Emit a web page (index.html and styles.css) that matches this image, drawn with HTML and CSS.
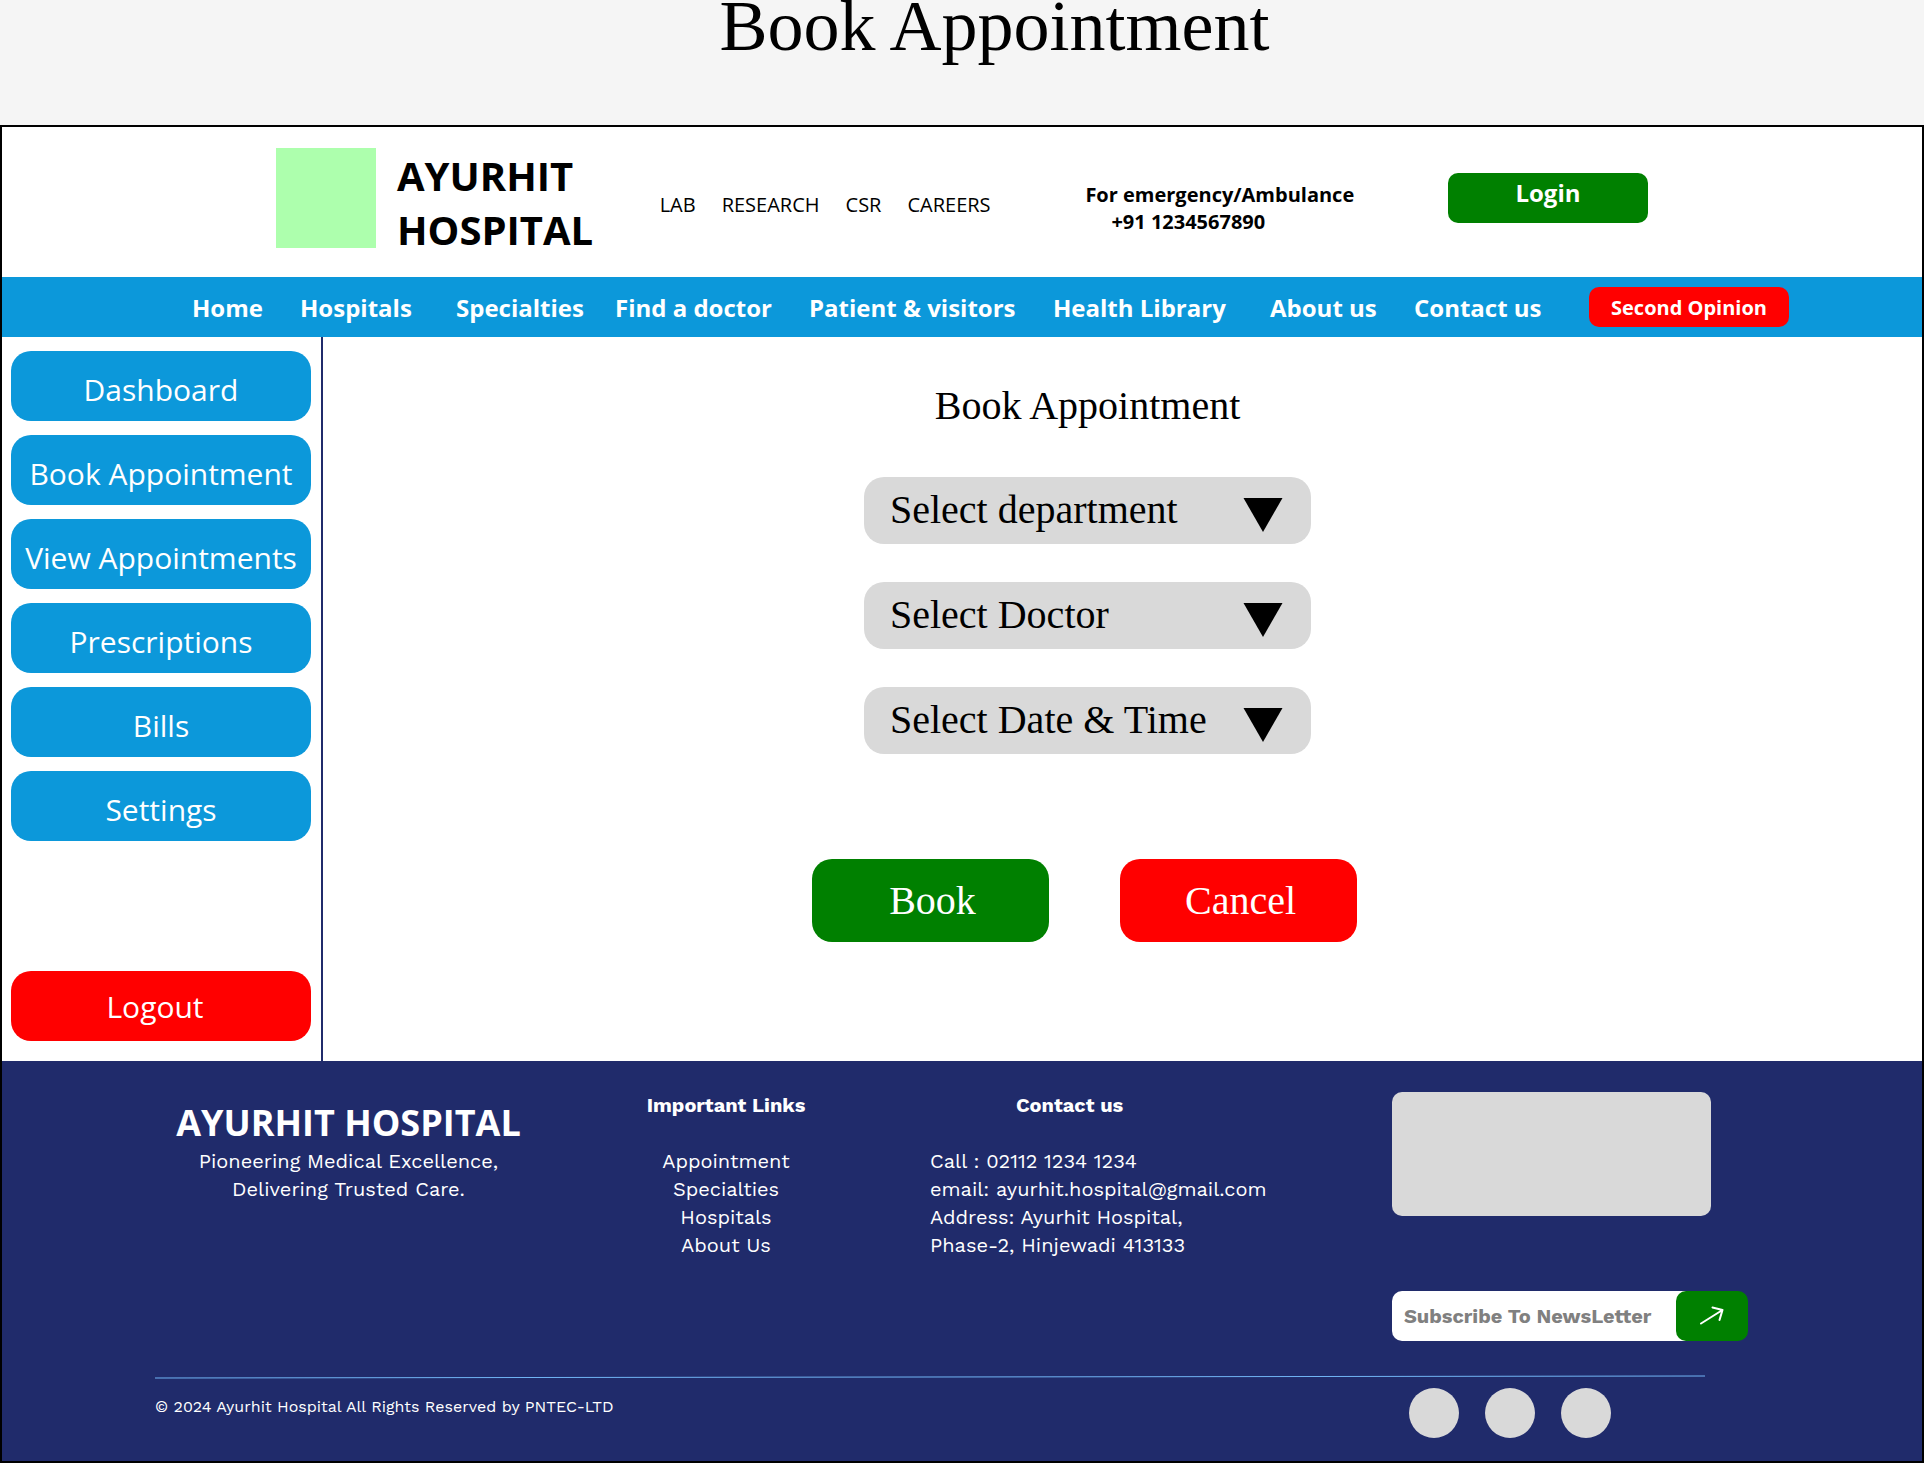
FILE: index.html
```html
<!DOCTYPE html>
<html lang="en">
<head>
  <meta charset="utf-8">
  <meta name="viewport" content="width=device-width, initial-scale=1">
  <title>Book Appointment</title>
  <link rel="stylesheet" href="styles.css">
</head>
<body>
  <h1 class="banner">Book Appointment</h1>

  <div class="frame">
    <header class="header">
      <div class="brand">
        <div class="brand-mark"></div>
        <p class="brand-name">AYURHIT<br>HOSPITAL</p>
      </div>
      <nav class="top-links" aria-label="Company">
        <a href="#">LAB</a>
        <a href="#">RESEARCH</a>
        <a href="#">CSR</a>
        <a href="#">CAREERS</a>
      </nav>
      <p class="emergency">For emergency/Ambulance<span class="phone">+91 1234567890</span></p>
      <button class="login" type="button">Login</button>
    </header>

    <nav class="main-nav" aria-label="Main">
      <a href="#">Home</a>
      <a href="#">Hospitals</a>
      <a href="#">Specialties</a>
      <a href="#">Find a doctor</a>
      <a href="#">Patient &amp; visitors</a>
      <a href="#">Health Library</a>
      <a href="#">About us</a>
      <a href="#">Contact us</a>
      <button class="opinion" type="button">Second Opinion</button>
    </nav>

    <div class="body">
      <aside class="sidebar">
        <button class="side-button" type="button">Dashboard</button>
        <button class="side-button" type="button">Book Appointment</button>
        <button class="side-button" type="button">View Appointments</button>
        <button class="side-button" type="button">Prescriptions</button>
        <button class="side-button" type="button">Bills</button>
        <button class="side-button" type="button">Settings</button>
        <button class="side-button logout" type="button">Logout</button>
      </aside>

      <main class="content">
        <h2 class="form-title">Book Appointment</h2>
        <form class="booking">
          <div class="field">
            <select class="select" aria-label="Department"><option>Select department</option></select>
            <svg class="caret" width="40" height="34" viewBox="0 0 40 34" aria-hidden="true"><path d="M0.5 0H39.5L20 34Z"/></svg>
          </div>
          <div class="field">
            <select class="select" aria-label="Doctor"><option>Select Doctor</option></select>
            <svg class="caret" width="40" height="34" viewBox="0 0 40 34" aria-hidden="true"><path d="M0.5 0H39.5L20 34Z"/></svg>
          </div>
          <div class="field">
            <select class="select" aria-label="Date and time"><option>Select Date &amp; Time</option></select>
            <svg class="caret" width="40" height="34" viewBox="0 0 40 34" aria-hidden="true"><path d="M0.5 0H39.5L20 34Z"/></svg>
          </div>
          <div class="actions">
            <button class="action book" type="button">Book</button>
            <button class="action cancel" type="reset">Cancel</button>
          </div>
        </form>
      </main>
    </div>

    <footer class="footer">
      <div class="footer-columns">
        <section class="about">
          <h2 class="footer-name">AYURHIT HOSPITAL</h2>
          <p>Pioneering Medical Excellence,<br>Delivering Trusted Care.</p>
        </section>
        <section class="links">
          <h3 class="footer-heading">Important Links</h3>
          <ul class="link-list">
            <li><a href="#">Appointment</a></li>
            <li><a href="#">Specialties</a></li>
            <li><a href="#">Hospitals</a></li>
            <li><a href="#">About Us</a></li>
          </ul>
        </section>
        <section class="contact">
          <h3 class="footer-heading contact-heading">Contact us</h3>
          <address class="address">Call : 02112 1234 1234<br>email: ayurhit.hospital@gmail.com<br>Address: Ayurhit Hospital,<br>Phase-2, Hinjewadi 413133</address>
        </section>
        <section class="news">
          <div class="map"></div>
          <form class="subscribe">
            <input class="subscribe-input" type="email" placeholder="Subscribe To NewsLetter" aria-label="Subscribe To NewsLetter">
            <button class="subscribe-button" type="button" aria-label="Subscribe">
              <svg width="24" height="20" viewBox="0 0 24 20" fill="none" stroke="#fff" stroke-width="2" stroke-linecap="round" stroke-linejoin="round" aria-hidden="true"><path d="M1 17.500L22.500 4M12.500 1.500L22.500 4L19.500 14"/></svg>
            </button>
          </form>
        </section>
      </div>
      <svg class="rule" viewBox="0 0 1550 4" preserveAspectRatio="none" aria-hidden="true"><path d="M0 3L1550 1" stroke="#71b5f5" fill="none"/></svg>
      <div class="legal">
        <p class="copyright">© 2024 Ayurhit Hospital All Rights Reserved by PNTEC-LTD</p>
        <div class="social">
          <a href="#" aria-label="Facebook"></a>
          <a href="#" aria-label="Twitter"></a>
          <a href="#" aria-label="Instagram"></a>
        </div>
      </div>
    </footer>
  </div>
</body>
</html>
```

FILE: styles.css
```css
* {
  box-sizing: border-box;
}

body {
  margin: 0;
  background: #f5f5f5;
  color: #000;
  font-family: "Open Sans", sans-serif;
}

h1, h2, h3, p, ul {
  margin: 0;
  padding: 0;
  font-weight: 400;
}

a {
  color: inherit;
  text-decoration: none;
}

button {
  border: 0;
  padding: 0;
  color: #fff;
  font-family: inherit;
  cursor: pointer;
}

.banner {
  padding: 0 0 73px 65px;
  font: 72px/52px "Liberation Serif", serif;
  text-align: center;
}

.frame {
  border: 2px solid #000;
  background: #fff;
}

/* Header */
.header {
  display: grid;
  grid-template-columns: 383fr 425fr 362fr 200px;
  align-items: start;
  padding: 21px 274px 20px;
}

.brand {
  display: flex;
  gap: 21px;
}

.brand-mark {
  width: 100px;
  height: 100px;
  background: #adffad;
}

.brand-name {
  padding-top: 1px;
  font-size: 40px;
  font-weight: 700;
  line-height: 54px;
}

.top-links {
  display: flex;
  gap: 26px;
  padding-top: 43px;
  font-size: 20px;
  line-height: 27px;
}

.emergency {
  padding-top: 33px;
  font-size: 20px;
  font-weight: 700;
  line-height: 27px;
}

.phone {
  display: block;
  padding-left: 26px;
}

.login {
  height: 50px;
  margin-top: 25px;
  padding-bottom: 12px;
  border-radius: 10px;
  background: #008000;
  font-size: 24px;
  font-weight: 700;
}

.main-nav {
  display: grid;
  grid-template-columns: 108fr 156fr 159fr 194fr 244fr 217fr 144fr 175fr 200px;
  align-items: center;
  height: 60px;
  padding: 0 133px 0 190px;
  background: #0c98da;
  color: #fff;
  font-size: 24px;
  font-weight: 700;
  white-space: nowrap;
}

.opinion {
  height: 40px;
  border-radius: 10px;
  background: #f00;
  font-size: 20px;
  font-weight: 700;
}

/* Sidebar and booking form */
.body {
  display: flex;
}

.sidebar {
  display: flex;
  flex-direction: column;
  gap: 14px;
  width: 321px;
  padding: 14px 10px 20px 9px;
  border-right: 2px solid #202b6b;
}

.side-button {
  height: 70px;
  padding-top: 6px;
  border-radius: 20px;
  background: #0c98da;
  font-size: 30px;
}

.logout {
  margin-top: 116px;
  padding: 0 12px 0 0;
  background: #f00;
}

.content {
  flex: 1;
  padding: 46px 70px 40px 0;
  font-family: "Liberation Serif", serif;
}

.form-title {
  margin-bottom: 48px;
  font-size: 40px;
  line-height: 46px;
  text-align: center;
}

.booking {
  display: flex;
  flex-direction: column;
  align-items: center;
  gap: 38px;
}

.field {
  display: grid;
  width: 447px;
  align-items: center;
}

.select,
.caret {
  grid-area: 1 / 1;
}

.select {
  appearance: none;
  height: 67px;
  padding: 0 26px 2px;
  border: 0;
  border-radius: 20px;
  background: #d9d9d9;
  color: #000;
  font-family: inherit;
  font-size: 40px;
}

.caret {
  justify-self: end;
  margin: 8px 28px 0 0;
  pointer-events: none;
}

.actions {
  display: flex;
  gap: 71px;
  margin-top: 67px;
  padding-right: 6px;
}

.action {
  width: 237px;
  height: 83px;
  padding-left: 4px;
  border-radius: 20px;
  font-size: 40px;
}

.book {
  background: #008000;
}

.cancel {
  background: #f00;
}

/* Footer */
.footer {
  padding: 31px 174px 23px 153px;
  background: #202b6b;
  color: #fff;
  font-family: "Work Sans", Inter, sans-serif;
  font-size: 20px;
  line-height: 28px;
}

.footer-columns {
  display: grid;
  grid-template-columns: 387fr 368fr 482fr 356px;
}

.about,
.links {
  text-align: center;
}

.footer-name {
  margin-top: 7px;
  font-family: "Open Sans", sans-serif;
  font-size: 36px;
  font-weight: 700;
  line-height: 48px;
}

.footer-heading {
  margin-bottom: 28px;
  font-size: 20px;
  font-weight: 700;
}

.links,
.contact {
  margin-top: -1px;
}

.contact-heading {
  padding-left: 86px;
}

.contact {
  padding-left: 20px;
}

.link-list {
  list-style: none;
}

.address {
  font-style: normal;
}

.map {
  width: 319px;
  height: 124px;
  border-radius: 10px;
  background: #d9d9d9;
}

.subscribe {
  display: flex;
  margin-top: 75px;
}

.subscribe-input {
  flex: 1;
  min-width: 0;
  height: 50px;
  margin-right: -10px;
  padding: 0 12px;
  border: 0;
  border-radius: 10px 0 0 10px;
  background: #fff;
  font: inherit;
  font-weight: 700;
}

.subscribe-input::placeholder {
  color: #808080;
  opacity: 1;
}

.subscribe-button {
  position: relative;
  display: grid;
  place-items: center;
  width: 72px;
  border-radius: 10px;
  background: #008000;
}

.rule {
  display: block;
  width: calc(100% - 43px);
  height: 4px;
  margin-top: 34px;
}

.legal {
  display: flex;
  justify-content: space-between;
  padding: 9px 137px 0 0;
}

.copyright {
  padding-top: 5px;
  font-size: 16px;
}

.social {
  display: flex;
  gap: 26px;
}

.social a {
  width: 50px;
  height: 50px;
  border-radius: 50%;
  background: #d9d9d9;
}
```
